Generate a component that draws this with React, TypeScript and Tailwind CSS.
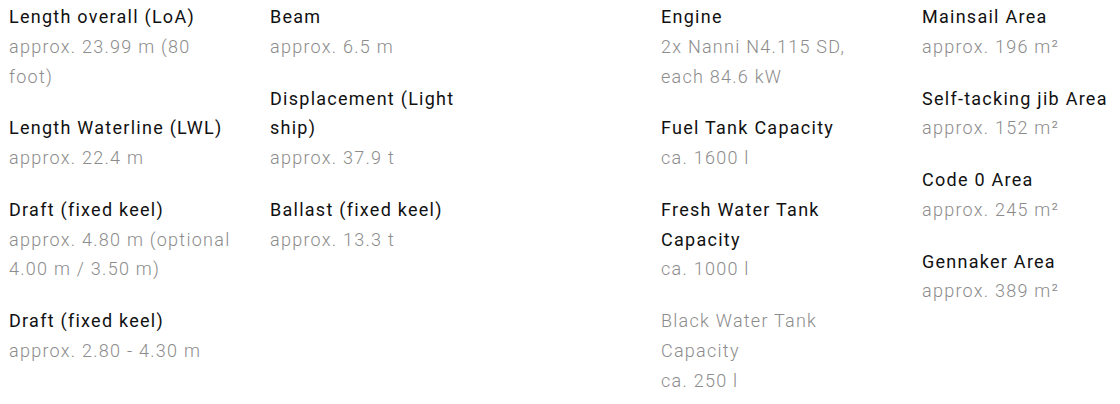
import React from "react"

type Spec = { label: string; value: string; muted?: boolean }

const left: Spec[][] = [
  [
    { label: "Length overall (LoA)", value: "approx. 23.99 m (80 foot)" },
    { label: "Length Waterline (LWL)", value: "approx. 22.4 m" },
    { label: "Draft (fixed keel)", value: "approx. 4.80 m (optional 4.00 m / 3.50 m)" },
    { label: "Draft (fixed keel)", value: "approx. 2.80 - 4.30 m" },
  ],
  [
    { label: "Beam", value: "approx. 6.5 m" },
    { label: "Displacement (Light ship)", value: "approx. 37.9 t" },
    { label: "Ballast (fixed keel)", value: "approx. 13.3 t" },
  ],
]

const right: Spec[][] = [
  [
    { label: "Engine", value: "2x Nanni N4.115 SD, each 84.6 kW" },
    { label: "Fuel Tank Capacity", value: "ca. 1600 l" },
    { label: "Fresh Water Tank Capacity", value: "ca. 1000 l" },
    { label: "Black Water Tank Capacity", value: "ca. 250 l", muted: true },
  ],
  [
    { label: "Mainsail Area", value: "approx. 196 m²" },
    { label: "Self-tacking jib Area", value: "approx. 152 m²" },
    { label: "Code 0 Area", value: "approx. 245 m²" },
    { label: "Gennaker Area", value: "approx. 389 m²" },
  ],
]

function Column({ items }: { items: Spec[] }) {
  return (
    <div className="w-[261px] shrink-0 pr-[36px]">
      {items.map((s, i) => (
        <div key={i} className="mb-[22px]">
          <div
            className={
              s.muted
                ? "font-light text-[#8c8c8c]"
                : "font-normal text-[#111111]"
            }
          >
            {s.label}
          </div>
          <div className="font-light text-[#8c8c8c]">{s.value}</div>
        </div>
      ))}
    </div>
  )
}

export default function App() {
  return (
    <div className="h-[404px] w-[1120px] overflow-hidden bg-white pl-[9px] pt-[2px] font-['Roboto',sans-serif] text-[18px] leading-[29.75px] tracking-[0.07em]">
      <div className="flex">
        <div className="flex">
          {left.map((col, i) => (
            <Column key={i} items={col} />
          ))}
        </div>
        <div className="ml-[130px] flex">
          {right.map((col, i) => (
            <Column key={i} items={col} />
          ))}
        </div>
      </div>
    </div>
  )
}
